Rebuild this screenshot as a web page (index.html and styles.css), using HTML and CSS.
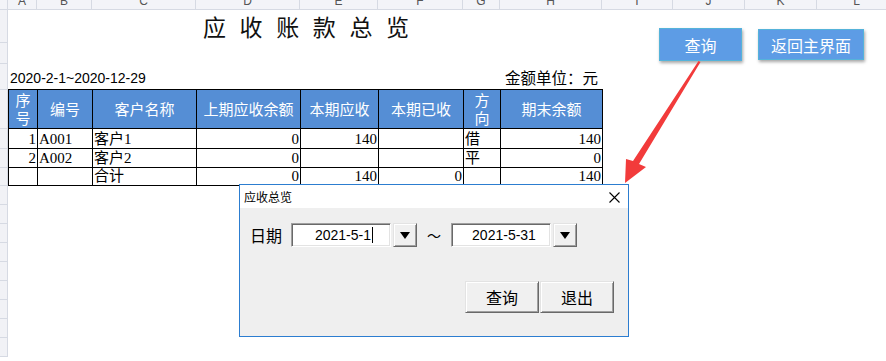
FILE: index.html
```html
<!DOCTYPE html>
<html lang="zh-CN">
<head>
    <meta charset="UTF-8">
    <meta name="viewport" content="width=device-width, initial-scale=1.0">
    <title>应收账款总览</title>
    <link rel="stylesheet" href="styles.css">
</head>
<body>
    <div class="colbar">
        <div class="corner"></div>
        <div class="col w-a"><span>A</span></div>
        <div class="col w-b"><span>B</span></div>
        <div class="col w-c"><span>C</span></div>
        <div class="col w-d"><span>D</span></div>
        <div class="col w-e"><span>E</span></div>
        <div class="col w-f"><span>F</span></div>
        <div class="col w-g"><span>G</span></div>
        <div class="col w-h"><span>H</span></div>
        <div class="col w-i"><span>I</span></div>
        <div class="col w-j"><span>J</span></div>
        <div class="col w-k"><span>K</span></div>
        <div class="col w-l"><span>L</span></div>
    </div>

    <div class="sheet">
        <div class="rowhdr">
            <div class="rh h33"></div>
            <div class="rh h21"></div>
            <div class="rh h26"></div>
            <div class="rh h39"></div>
            <div class="rh h20"></div>
            <div class="rh h19"></div>
            <div class="rh h18"></div>
            <div class="rh h19"></div>
            <div class="rh h19"></div>
            <div class="rh h19"></div>
            <div class="rh h19"></div>
            <div class="rh h19"></div>
            <div class="rh h19"></div>
            <div class="rh h19"></div>
            <div class="rh h19"></div>
            <div class="rh h19"></div>
        </div>

        <div class="main">
            <div class="title-row">
                <h1 class="title">应收账款总览</h1>
            </div>
            <div class="gap-row"></div>
            <div class="date-row">
                <span class="range">2020-2-1~2020-12-29</span>
                <span class="unit">金额单位：元</span>
            </div>

            <table class="ledger">
                <colgroup>
                    <col class="w-a"><col class="w-b"><col class="w-c"><col class="w-d">
                    <col class="w-e"><col class="w-f"><col class="w-g"><col class="w-h">
                </colgroup>
                <thead>
                    <tr>
                        <th><span class="stack">序</span><span class="stack">号</span></th>
                        <th>编号</th>
                        <th>客户名称</th>
                        <th>上期应收余额</th>
                        <th>本期应收</th>
                        <th>本期已收</th>
                        <th><span class="stack">方</span><span class="stack">向</span></th>
                        <th>期末余额</th>
                    </tr>
                </thead>
                <tbody>
                    <tr class="r1">
                        <td class="num">1</td><td>A001</td><td>客户1</td><td class="num">0</td>
                        <td class="num">140</td><td></td><td>借</td><td class="num">140</td>
                    </tr>
                    <tr class="r2">
                        <td class="num">2</td><td>A002</td><td>客户2</td><td class="num">0</td>
                        <td></td><td></td><td>平</td><td class="num">0</td>
                    </tr>
                    <tr class="r3">
                        <td></td><td></td><td>合计</td><td class="num">0</td>
                        <td class="num">140</td><td class="num">0</td><td></td><td class="num">140</td>
                    </tr>
                </tbody>
            </table>
        </div>
    </div>

    <!-- floating shapes on the sheet -->
    <div class="shape-btn btn-query">查询</div>
    <div class="shape-btn btn-home">返回主界面</div>

    <svg class="arrow" width="886" height="361" viewBox="0 0 886 361">
        <polygon points="698.5,61 700.5,62 639,164 646,167 625,183 626,159 633,161" fill="#f23b3b"/>
    </svg>

    <div class="dialog">
        <div class="dlg-title">
            <span>应收总览</span>
            <svg class="close" width="11" height="11" viewBox="0 0 11 11">
                <path d="M0.5 0.5 L10.5 10.5 M10.5 0.5 L0.5 10.5" stroke="#000" stroke-width="1.1"/>
            </svg>
        </div>
        <div class="dlg-body">
            <div class="date-pick">
                <span class="lbl">日期</span>
                <div class="field">2021-5-1<span class="caret"></span></div>
                <div class="drop"></div>
                <span class="tilde">～</span>
                <div class="field">2021-5-31</div>
                <div class="drop"></div>
            </div>
            <div class="dlg-actions">
                <button>查询</button>
                <button>退出</button>
            </div>
        </div>
    </div>
</body>
</html>
```

FILE: styles.css
```css
* {
    box-sizing: border-box;
}
body {
    margin: 0;
    width: 886px;
    height: 361px;
    overflow: hidden;
    position: relative;
    background-color: #fff;
    font-family: "Noto Sans CJK SC", sans-serif;
}

/* column letters */
.colbar {
    display: flex;
    height: 10px;
    background-color: #f3f4f8;
    border-bottom: 1px solid #d6dae3;
    overflow: hidden;
}
.corner {
    width: 8px;
    flex: none;
    border-right: 1px solid #d6dae3;
}
.col {
    flex: none;
    border-right: 1px solid #d6dae3;
    text-align: center;
    font-family: "Liberation Sans", sans-serif;
    font-size: 12px;
    color: #555;
    overflow: hidden;
}
.col span {
    display: block;
    line-height: 12px;
    margin-top: -5px;
}
.w-a { width: 29px; }
.w-b { width: 55px; }
.w-c { width: 104px; }
.w-d { width: 104px; }
.w-e { width: 78px; }
.w-f { width: 85px; }
.w-g { width: 37px; }
.w-h { width: 102px; }
.w-i { width: 71px; }
.w-j { width: 72px; }
.w-k { width: 72px; }
.w-l { width: 80px; }

/* sheet */
.sheet {
    display: flex;
}
.rowhdr {
    width: 8px;
    flex: none;
    background-color: #f1f2f6;
    border-right: 1px solid #d6dae3;
}
.rh {
    border-bottom: 1px solid #d6dae3;
}
.h33 { height: 33px; }
.h21 { height: 21px; }
.h26 { height: 26px; }
.h39 { height: 39px; }
.h20 { height: 20px; }
.h19 { height: 19px; }
.h18 { height: 18px; }

.main {
    flex: 1;
}
.title-row {
    height: 32px;
    padding-top: 5px;
}
.title {
    margin: 0 0 0 195px;
    font-size: 23px;
    font-weight: normal;
    line-height: 23px;
    letter-spacing: 13.6px;
    color: #111;
}
.gap-row {
    height: 21px;
}
.date-row {
    width: 594px;
    height: 26px;
    display: flex;
    justify-content: space-between;
    align-items: flex-end;
    padding: 0 4px 3px 2px;
}
.range {
    font-family: "Liberation Sans", sans-serif;
    font-size: 14px;
    line-height: 16px;
}
.unit {
    font-size: 15.5px;
    line-height: 18px;
}

/* ledger table */
.ledger {
    border-collapse: collapse;
    table-layout: fixed;
    width: 595px;
    font-family: "Liberation Serif", "Noto Sans CJK SC", serif;
    font-size: 15px;
}
.ledger th,
.ledger td {
    border: 1px solid #000;
    padding: 0 1px;
    white-space: nowrap;
    overflow: hidden;
}
.ledger th {
    height: 39px;
    background-color: #558ed5;
    color: #fff;
    font-family: "Noto Sans CJK SC", sans-serif;
    font-weight: normal;
    font-size: 15px;
    line-height: 18px;
    text-align: center;
}
.stack {
    display: block;
    height: 18px;
    line-height: 18px;
}
.ledger td {
    line-height: 17px;
    text-align: left;
    vertical-align: bottom;
}
.ledger .r1 td { height: 20px; }
.ledger .r2 td { height: 19px; }
.ledger .r3 td { height: 18px; }
.ledger td.num {
    text-align: right;
}

/* shapes */
.shape-btn {
    position: absolute;
    display: flex;
    align-items: center;
    justify-content: center;
    background-color: #5d9ce5;
    border: 1px solid #55b3da;
    box-shadow: 1px 2px 3px rgba(0, 0, 0, 0.35);
    color: #fff;
    font-size: 16px;
}
.btn-query {
    left: 659px;
    top: 28px;
    width: 83px;
    height: 33px;
}
.btn-home {
    left: 758px;
    top: 29px;
    width: 106px;
    height: 31px;
}
.arrow {
    position: absolute;
    left: 0;
    top: 0;
    pointer-events: none;
    z-index: 3;
}

/* dialog */
.dialog {
    position: absolute;
    left: 239px;
    top: 184px;
    width: 390px;
    height: 153px;
    border: 1px solid #2c7dd0;
    background-color: #efefef;
    display: flex;
    flex-direction: column;
    z-index: 2;
}
.dlg-title {
    height: 23px;
    flex: none;
    background-color: #fff;
    display: flex;
    align-items: center;
    justify-content: space-between;
    padding: 0 8px 0 4px;
    font-size: 12px;
    color: #000;
}
.close {
    margin-top: 1px;
}
.dlg-body {
    flex: 1;
    padding: 15px 14px 0 10px;
}
.date-pick {
    display: flex;
    align-items: center;
    height: 24px;
}
.lbl {
    font-size: 16px;
    width: 32px;
    margin-right: 9px;
}
.field {
    width: 100px;
    height: 24px;
    background-color: #fff;
    border-top: 1px solid #a0a0a0;
    border-left: 1px solid #a0a0a0;
    border-right: 1px solid #fff;
    border-bottom: 1px solid #fff;
    box-shadow: inset 1px 1px 0 #696969, inset -1px -1px 0 #e3e3e3;
    display: flex;
    align-items: center;
    justify-content: center;
    font-family: "Liberation Sans", sans-serif;
    font-size: 14px;
    padding-left: 6px;
}
.caret {
    width: 1px;
    height: 16px;
    background-color: #000;
    margin-left: 1px;
}
.drop {
    width: 24px;
    height: 24px;
    margin-left: 2px;
    background-color: #f0f0f0;
    border-top: 1px solid #e3e3e3;
    border-left: 1px solid #e3e3e3;
    border-right: 1px solid #696969;
    border-bottom: 1px solid #696969;
    box-shadow: inset 1px 1px 0 #fff, inset -1px -1px 0 #a0a0a0;
    display: flex;
    align-items: center;
    justify-content: center;
}
.drop::after {
    content: "";
    border-left: 5px solid transparent;
    border-right: 5px solid transparent;
    border-top: 7px solid #000;
}
.tilde {
    font-size: 14px;
    width: 34px;
    text-align: center;
}
.dlg-actions {
    display: flex;
    justify-content: flex-end;
    margin-top: 34px;
    gap: 1px;
}
.dlg-actions button {
    width: 74px;
    height: 32px;
    padding: 0;
    background-color: #f0f0f0;
    border-top: 1px solid #e3e3e3;
    border-left: 1px solid #e3e3e3;
    border-right: 1px solid #696969;
    border-bottom: 1px solid #696969;
    box-shadow: inset 1px 1px 0 #fff, inset -1px -1px 0 #a0a0a0;
    font-family: "Noto Sans CJK SC", sans-serif;
    font-size: 16px;
    color: #000;
}
```
